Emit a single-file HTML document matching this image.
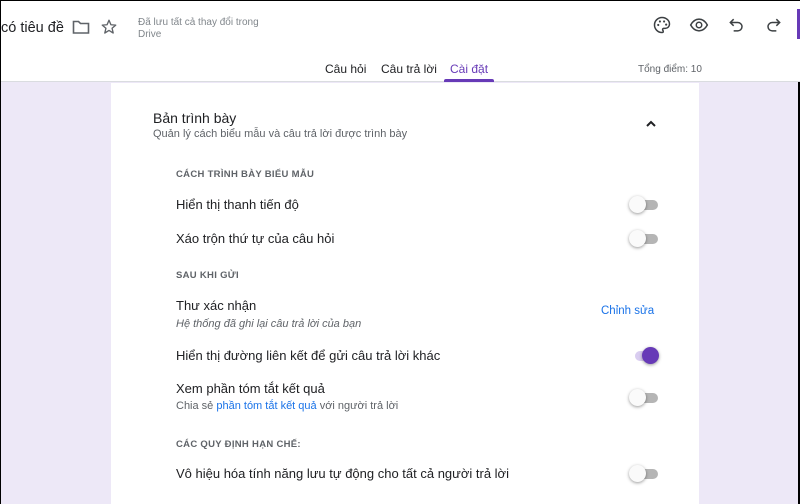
<!DOCTYPE html>
<html style="overflow:hidden;height:504px"><head><meta charset="utf-8"><style>
*{margin:0;padding:0;box-sizing:border-box}
body{width:800px;height:504px;overflow:hidden;background:#ede8f7;font-family:"Liberation Sans",Roboto,sans-serif;position:relative;border-top:1px solid #000;border-left:1px solid #000;border-right:2px solid #000}
.a{position:absolute;white-space:nowrap}
#hdr{position:absolute;left:0;top:0;width:800px;height:81px;background:#fff;border-bottom:1px solid #dadce0}
#card{position:absolute;left:110px;top:82px;width:588px;height:421px;background:#fff}
.t{font-size:13px;color:#202124}
.h{font-size:9.5px;font-weight:bold;color:#5f6368;letter-spacing:.3px}
.tg{position:absolute;width:30px;height:14px}
.tg .tr{position:absolute;left:6px;top:2px;width:23px;height:10px;border-radius:5px;background:#b5b5b5}
.tg .k{position:absolute;left:0;top:-2px;width:17px;height:17px;border-radius:50%;background:#fafafa;box-shadow:0 1px 3px rgba(0,0,0,.4)}
.tg.on .tr{background:#d9cdf0}.tg.on .k{left:13px;background:#673ab7}
</style></head><body>
<div id="hdr"></div>
<div class="a" style="left:0;top:19px;font-size:14.5px;color:#202124">có tiêu đề</div>
<svg class="a" style="left:71px;top:18px" width="18" height="16" viewBox="0 0 18 16"><path d="M1.5 2.5h5l2 2h8v9.5h-15z" fill="none" stroke="#5f6368" stroke-width="1.6"/></svg>
<svg class="a" style="left:99px;top:17px" width="18" height="18" viewBox="0 0 24 24"><path d="M12 3l2.6 6 6.4.5-4.9 4.2 1.5 6.3L12 16.6 6.4 20l1.5-6.3L3 9.5 9.4 9z" fill="none" stroke="#5f6368" stroke-width="1.8" stroke-linejoin="round"/></svg>
<div class="a" style="left:137px;top:16px;font-size:10px;color:#80868b;line-height:12px">Đã lưu tất cả thay đổi trong<br>Drive</div>
<svg class="a" style="left:651px;top:14px" width="20" height="20" viewBox="0 0 24 24"><path d="M12 3a9 9 0 000 18c1 0 1.5-.7 1.5-1.4 0-.9-.8-1.2-.8-2.1 0-.8.7-1.5 1.5-1.5H16a5 5 0 005-5c0-4.4-4-8-9-8z" fill="none" stroke="#3c4043" stroke-width="1.8"/><circle cx="7.5" cy="12" r="1.3" fill="#3c4043"/><circle cx="9.5" cy="7.8" r="1.3" fill="#3c4043"/><circle cx="14.5" cy="7.8" r="1.3" fill="#3c4043"/><circle cx="17" cy="11.5" r="1.3" fill="#3c4043"/></svg>
<svg class="a" style="left:688px;top:14px" width="20" height="20" viewBox="0 0 24 24"><path d="M2 12c2.5-4.5 6-7 10-7s7.5 2.5 10 7c-2.5 4.5-6 7-10 7s-7.5-2.5-10-7z" fill="none" stroke="#3c4043" stroke-width="1.8"/><circle cx="12" cy="12" r="3.3" fill="none" stroke="#3c4043" stroke-width="1.8"/></svg>
<svg class="a" style="left:726px;top:14px" width="20" height="20" viewBox="0 0 24 24"><path d="M8 5L4 9l4 4M4 9h9a5 5 0 010 10H8" fill="none" stroke="#3c4043" stroke-width="1.8"/></svg>
<svg class="a" style="left:762px;top:14px" width="20" height="20" viewBox="0 0 24 24"><path d="M16 5l4 4-4 4M20 9h-9a5 5 0 000 10h5" fill="none" stroke="#3c4043" stroke-width="1.8"/></svg>
<div class="a" style="left:796px;top:8px;width:3px;height:30px;background:#673ab7"></div>
<div class="a" style="left:324px;top:61px;font-size:12px;color:#202124">Câu hỏi</div>
<div class="a" style="left:380px;top:61px;font-size:12px;color:#202124">Câu trả lời</div>
<div class="a" style="left:449px;top:61px;font-size:12px;color:#673ab7">Cài đặt</div>
<div class="a" style="left:443px;top:78px;width:50px;height:3px;background:#673ab7;border-radius:2px 2px 0 0"></div>
<div class="a" style="left:637px;top:63px;font-size:10px;color:#5f6368">Tổng điểm: 10</div>
<div id="card"></div>
<div class="a" style="left:152px;top:109px;font-size:14px;color:#202124">Bản trình bày</div>
<div class="a" style="left:152px;top:127px;font-size:11px;color:#5f6368">Quản lý cách biểu mẫu và câu trả lời được trình bày</div>
<svg class="a" style="left:643px;top:117px" width="14" height="12" viewBox="0 0 14 12"><path d="M3 8l4-4 4 4" fill="none" stroke="#202124" stroke-width="2"/></svg>
<div class="a h" style="left:175px;top:168px">CÁCH TRÌNH BÀY BIỂU MẪU</div>
<div class="a t" style="left:175px;top:196px">Hiển thị thanh tiến độ</div>
<div class="a t" style="left:175px;top:230px">Xáo trộn thứ tự của câu hỏi</div>
<div class="a h" style="left:175px;top:269px">SAU KHI GỬI</div>
<div class="a t" style="left:175px;top:297px">Thư xác nhận</div>
<div class="a" style="left:175px;top:317px;font-size:11px;font-style:italic;color:#5f6368">Hệ thống đã ghi lại câu trả lời của bạn</div>
<div class="a" style="left:600px;top:304px;font-size:11.5px;color:#1a73e8">Chỉnh sửa</div>
<div class="a t" style="left:175px;top:347px">Hiển thị đường liên kết để gửi câu trả lời khác</div>
<div class="a t" style="left:175px;top:380px">Xem phần tóm tắt kết quả</div>
<div class="a" style="left:175px;top:399px;font-size:11px;color:#5f6368">Chia sẻ <span style="color:#1a73e8">phần tóm tắt kết quả</span> với người trả lời</div>
<div class="a h" style="left:175px;top:438px">CÁC QUY ĐỊNH HẠN CHẾ:</div>
<div class="a t" style="left:175px;top:465px">Vô hiệu hóa tính năng lưu tự động cho tất cả người trả lời</div>
<div class="tg" style="left:628px;top:197px"><div class="tr"></div><div class="k"></div></div>
<div class="tg" style="left:628px;top:231px"><div class="tr"></div><div class="k"></div></div>
<div class="tg on" style="left:628px;top:348px"><div class="tr"></div><div class="k"></div></div>
<div class="tg" style="left:628px;top:390px"><div class="tr"></div><div class="k"></div></div>
<div class="tg" style="left:628px;top:466px"><div class="tr"></div><div class="k"></div></div>
</body></html>
